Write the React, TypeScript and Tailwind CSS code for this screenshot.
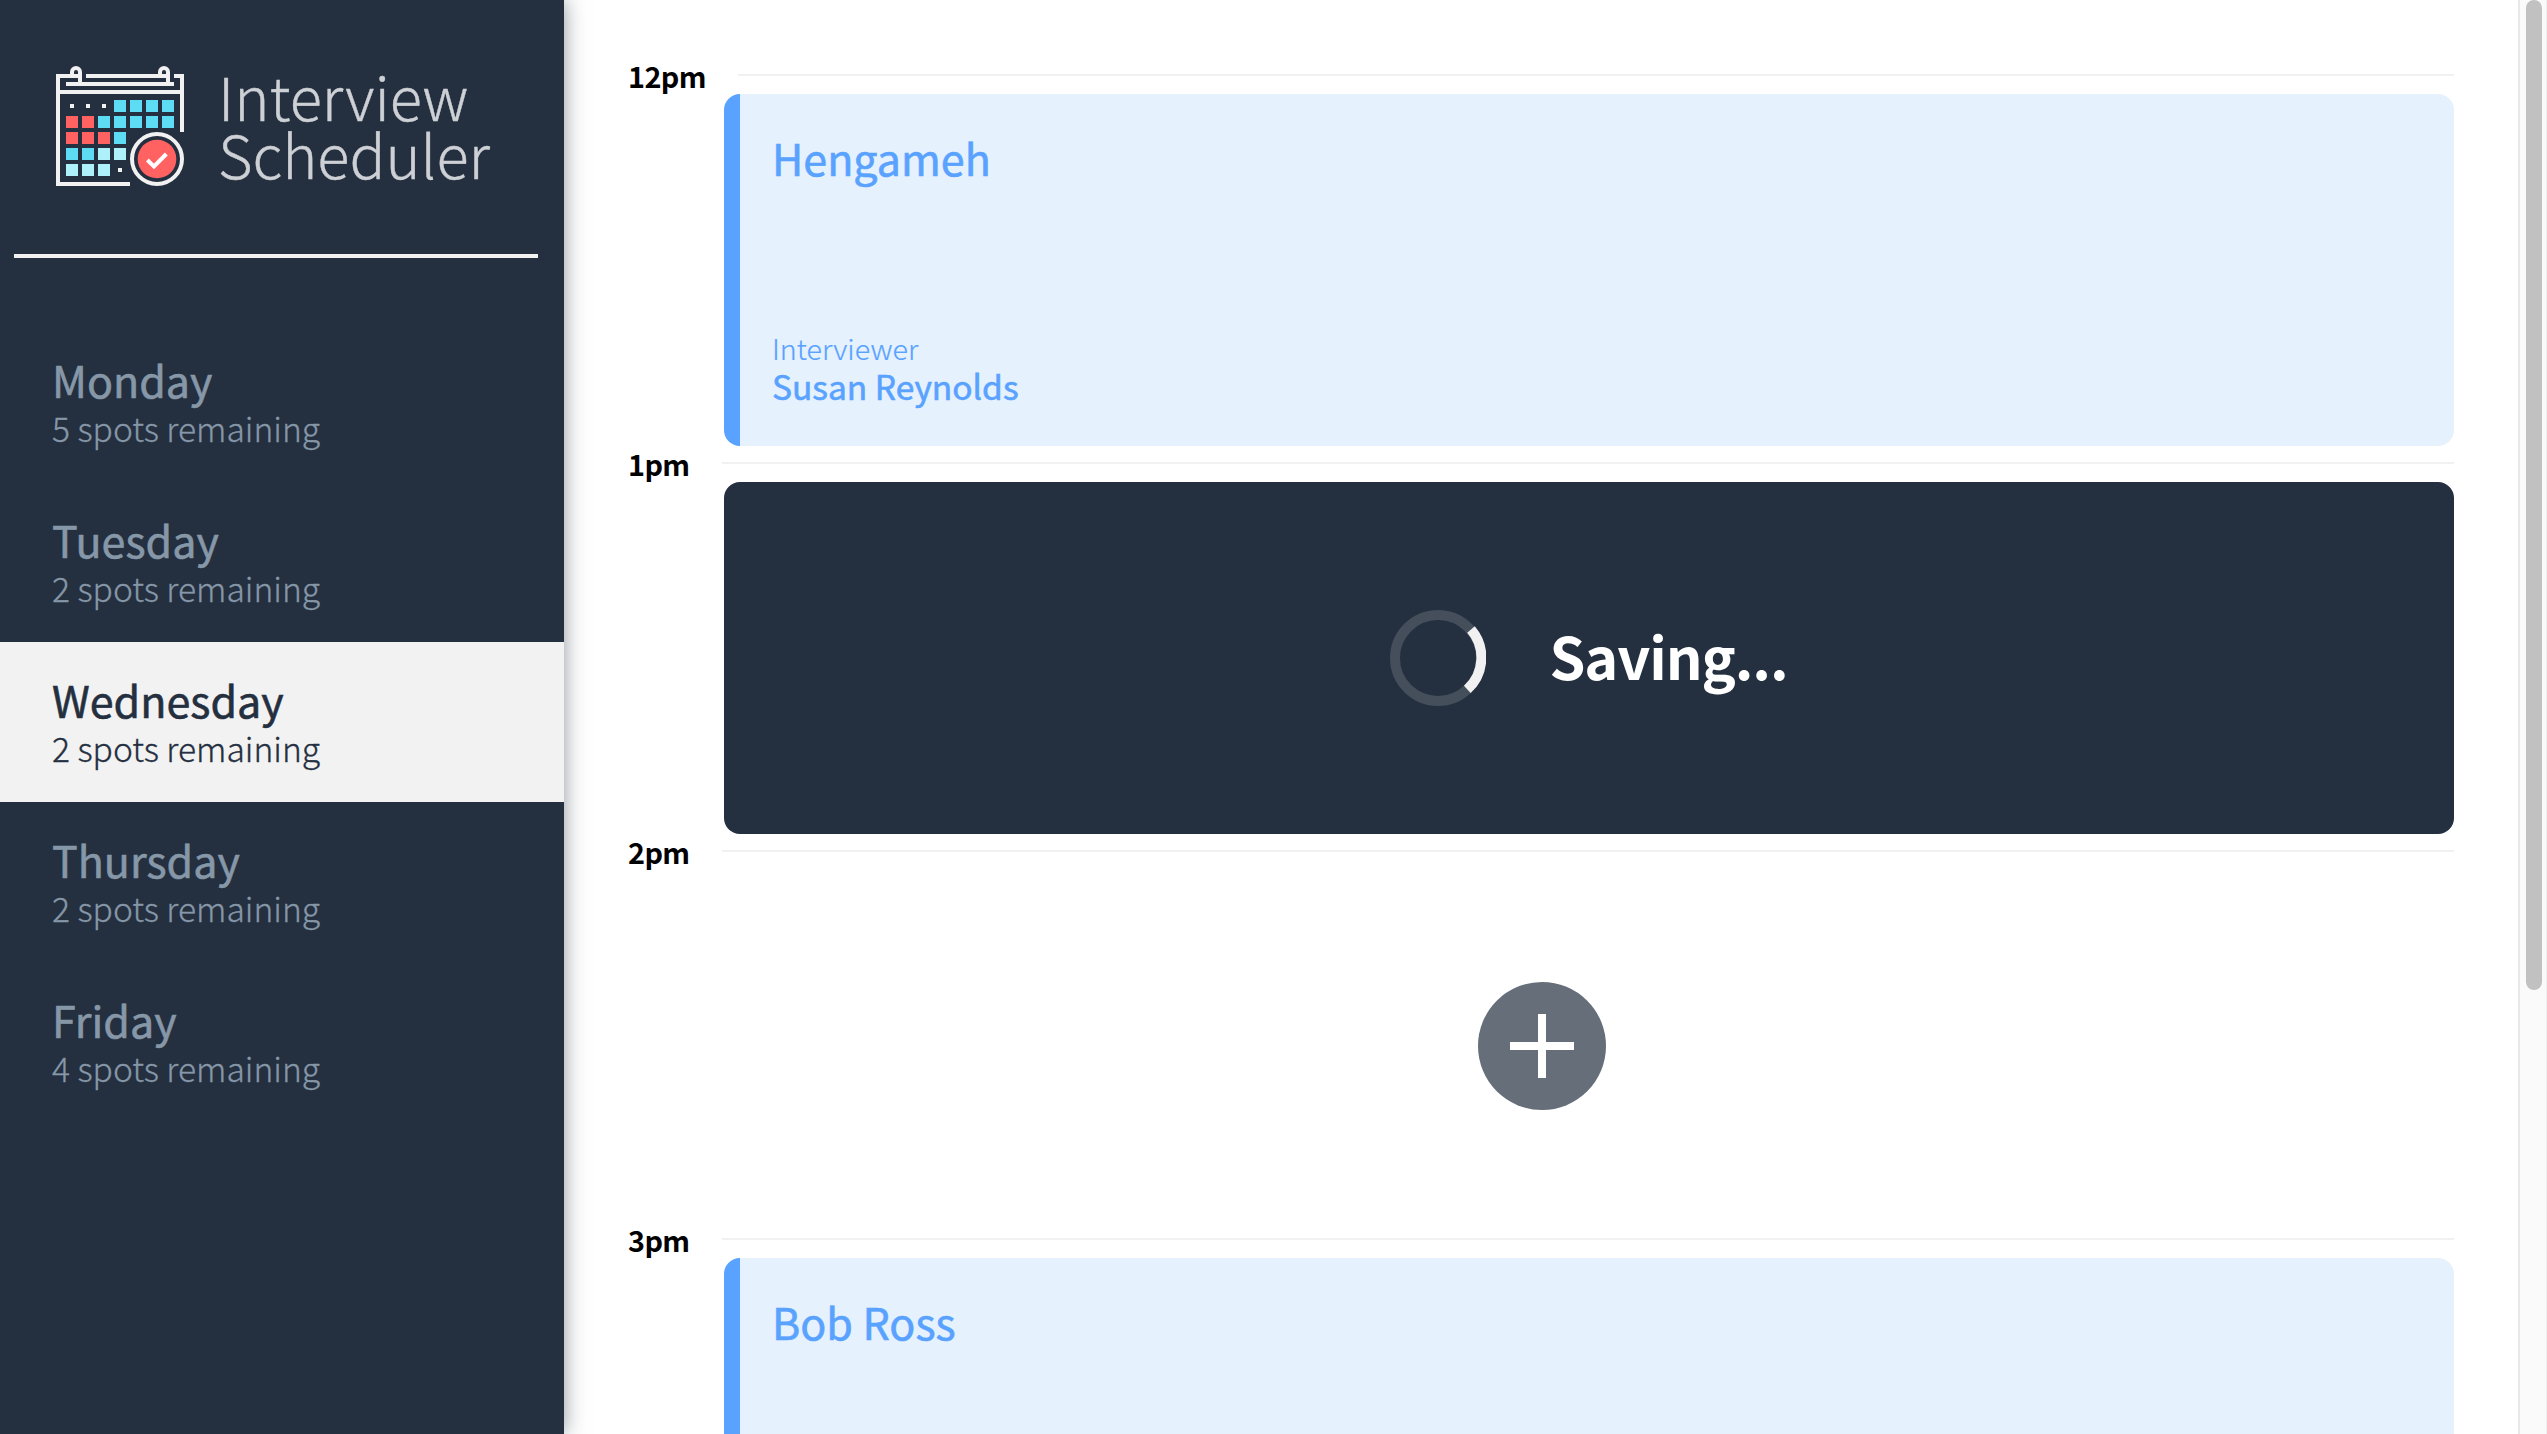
type Day = { name: string; spots: number };
type Slot =
  | { time: string; kind: "booked"; student: string; interviewer?: string }
  | { time: string; kind: "saving" }
  | { time: string; kind: "empty" };

const days: Day[] = [
  { name: "Monday", spots: 5 },
  { name: "Tuesday", spots: 2 },
  { name: "Wednesday", spots: 2 },
  { name: "Thursday", spots: 2 },
  { name: "Friday", spots: 4 },
];

const slots: Slot[] = [
  { time: "12pm", kind: "booked", student: "Hengameh", interviewer: "Susan Reynolds" },
  { time: "1pm", kind: "saving" },
  { time: "2pm", kind: "empty" },
  { time: "3pm", kind: "booked", student: "Bob Ross" },
];

const CYAN = "#5edcf3";
const RED = "#ff6260";
const PALE = "#aef1fb";

// Calendar cells, row by row; a dot stands for a day outside the month.
const cells: string[][] = [
  ["dot", "dot", "dot", CYAN, CYAN, CYAN, CYAN],
  [RED, RED, CYAN, CYAN, CYAN, CYAN, CYAN],
  [RED, RED, RED, CYAN],
  [CYAN, CYAN, PALE, PALE],
  [PALE, PALE, PALE, "dot"],
];

function CalendarIcon() {
  return (
    <svg className="h-[120px] w-32 shrink-0" viewBox="48 48 384 360" fill="none">
      <g stroke="#f1f1f1" strokeWidth="12">
        <path d="M126 78H54V402H270" />
        <path d="M138 78H390" />
        <path d="M402 78H426V246" />
        <path d="M78 102H402" />
        <path d="M54 126H426" />
        <path d="M96 78V66a12 12 0 0 1 24 0V102" />
        <path d="M360 78V66a12 12 0 0 1 24 0V102" />
      </g>
      {cells.map((row, r) =>
        row.map((c, i) =>
          c === "dot" ? (
            <rect key={`${r}-${i}`} x={90 + i * 48} y={162 + r * 48} width="12" height="12" fill="#f1f1f1" />
          ) : (
            <rect key={`${r}-${i}`} x={78 + i * 48} y={150 + r * 48} width="36" height="36" fill={c} />
          )
        )
      )}
      <circle cx="351" cy="327" r="75" stroke="#f1f1f1" strokeWidth="12" />
      <circle cx="351" cy="327" r="58" fill={RED} />
      <path d="M322 330L342 349L379 312" stroke="#fff" strokeWidth="12" />
    </svg>
  );
}

function Sidebar() {
  return (
    <aside className="relative z-10 flex h-full w-[564px] shrink-0 flex-col bg-[#242f3f] pt-[66px] shadow-[0_0_20px_rgba(34,46,62,0.5)]">
      <div className="flex h-[188px] items-start gap-[34px] pl-14">
        <CalendarIcon />
        <div className="text-[59.6px] leading-[58px] font-light text-[#cdd0d4] [-webkit-text-stroke:0.4px]">
          <div>Interview</div>
          <div>Scheduler</div>
        </div>
      </div>
      <hr className="mr-[26px] ml-3.5 h-1 border-0 bg-[#f1f1f1]" />
      <ul className="mt-16">
        {days.map((d) => (
          <li
            key={d.name}
            className={
              d.name === "Wednesday"
                ? "h-40 bg-[#f2f2f2] pt-[33px] pl-[52px] text-[#242f3f]"
                : "h-40 pt-[33px] pl-[52px] text-[#8697a8]"
            }
          >
            <h2 className="text-[43px] leading-[48px] [-webkit-text-stroke:0.6px]">{d.name}</h2>
            <h3 className="mt-[7px] text-[33.6px] leading-9 font-light [-webkit-text-stroke:0.3px]">
              {d.spots} spots remaining
            </h3>
          </li>
        ))}
      </ul>
    </aside>
  );
}

function SlotBody({ slot }: { slot: Slot }) {
  if (slot.kind === "booked") {
    return (
      <article className="ml-24 flex h-[352px] overflow-hidden rounded-2xl bg-[#e5f1fd] text-[#59a2ff]">
        <div className="w-4 bg-[#59a2ff]" />
        <div className="flex flex-col justify-between pt-[39px] pb-[42px] pl-8">
          <h2 className="text-[43px] leading-[48px] [-webkit-text-stroke:0.6px]">{slot.student}</h2>
          {slot.interviewer && (
            <div>
              <h4 className="text-[28.7px] leading-8 font-light [-webkit-text-stroke:0.2px]">Interviewer</h4>
              <h3 className="mt-1 text-[33.5px] leading-9 [-webkit-text-stroke:0.6px]">{slot.interviewer}</h3>
            </div>
          )}
        </div>
      </article>
    );
  }
  if (slot.kind === "saving") {
    return (
      <article className="ml-24 flex h-[352px] items-center justify-center gap-[63px] rounded-2xl bg-[#242f3f]">
        <svg className="size-24" viewBox="0 0 96 96" fill="none" strokeWidth="10">
          <circle cx="48" cy="48" r="43" stroke="#444f5b" />
          <path d="M81 19.6A43 43 0 0 1 77.3 79.4" stroke="#f1f1f1" />
        </svg>
        <h1 className="mb-1.5 text-[57.6px] leading-[64px] font-bold tracking-[-1.1px] text-white">Saving...</h1>
      </article>
    );
  }
  return (
    <article className="ml-0.5 flex h-[352px] items-center justify-center">
      <button className="flex size-32 items-center justify-center rounded-full bg-[#666e7a]">
        <svg className="size-16" viewBox="0 0 64 64" stroke="#fff" strokeWidth="8">
          <path d="M32 0V64M0 32H64" />
        </svg>
      </button>
    </article>
  );
}

export default function App() {
  return (
    <div className="flex h-[1434px] w-[2547px] overflow-hidden bg-white font-['Noto_Sans_CJK_SC','Noto_Sans',sans-serif]">
      <Sidebar />
      <main className="h-full flex-1 overflow-hidden px-16 pt-[62px]">
        {slots.map((s) => (
          <section key={s.time} className="h-[388px]">
            <header className="flex h-8">
              <h4
                className={
                  s.time === "12pm"
                    ? "w-[110px] text-[28.8px] leading-[27px] font-bold tracking-[-0.6px] text-black"
                    : "w-[94px] text-[28.8px] leading-[27px] font-bold tracking-[-0.6px] text-black"
                }
              >
                {s.time}
              </h4>
              <div className="mt-3 h-0.5 flex-1 bg-[#f1f1f1]" />
            </header>
            <SlotBody slot={s} />
          </section>
        ))}
      </main>
      <div className="flex h-full w-[29px] shrink-0 justify-between border-r border-l-2 border-r-[#ededed] border-l-[#e8e8e8] bg-[#fafafa] pr-1 pl-1.5">
        <div className="h-[990px] w-4 rounded-full bg-[#c1c1c1]" />
      </div>
    </div>
  );
}
